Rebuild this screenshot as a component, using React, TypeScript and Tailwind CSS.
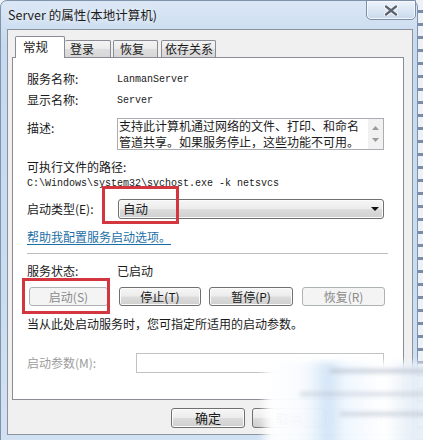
import React from "react";

const cjk = "font-['Noto_Sans_CJK_SC','Microsoft_YaHei',sans-serif]";
const mono = "font-['Liberation_Mono','Noto_Sans_CJK_SC',monospace]";

function Btn({ label, w, disabled }: { label: string; w: string; disabled?: boolean }) {
  return (
    <div
      className={`${w} h-full flex items-center justify-center rounded-[3px] border text-[12px] ${cjk} ${
        disabled
          ? "border-[#adb2b5] bg-[#f4f4f4] text-[#8a8a8a]"
          : "border-[#707070] text-[#1a1a1a] bg-[linear-gradient(180deg,#f6f6f6_0%,#ececec_48%,#dcdcdc_52%,#cfcfcf_100%)] shadow-[inset_0_0_0_1px_#fbfbfb]"
      }`}
    >
      {label}
    </div>
  );
}

const tabBg =
  "border-[#898c95] rounded-t-[2px] bg-[linear-gradient(180deg,#f4f4f4_0%,#ebebeb_50%,#dedede_51%,#d6d6d6_100%)] leading-[16px] whitespace-nowrap";

export default function App() {
  return (
    <div className="relative w-[423px] h-[440px] overflow-hidden bg-[repeating-linear-gradient(180deg,#eef2f7_0px,#eef2f7_10px,#7a8ca8_10px,#7a8ca8_13px)]">
      {/* window */}
      <div className="w-[418px] h-[452px] rounded-t-[7px] border border-[#7f93ad] bg-[linear-gradient(180deg,#dbe7f5_0%,#c6d9ee_10%,#c9dcf0_60%,#d3e2f3_100%)]">
        {/* title bar */}
        <div className="relative h-[28px] flex items-center pl-[7px]">
          <span className={`text-[12.5px] text-[#1c1c1c] ${cjk} [text-shadow:0_0_6px_#ffffff]`}>
            Server 的属性(本地计算机)
          </span>
          <div className="absolute right-[1px] top-[-1px] w-[50px] h-[20px] rounded-b-[5px] border border-[#7b8ea8] bg-[linear-gradient(180deg,#eef4fb_0%,#dae6f3_50%,#c9d9ec_100%)] shadow-[inset_0_0_0_1px_#f4f8fc] flex items-center justify-center">
            <svg width="14" height="11" viewBox="0 0 14 11">
              <path d="M2 1.5 L12 9.5 M12 1.5 L2 9.5" stroke="#ffffff" strokeWidth="4.2" strokeLinecap="round" />
              <path d="M2 1.5 L12 9.5 M12 1.5 L2 9.5" stroke="#5d6573" strokeWidth="2.4" strokeLinecap="round" />
            </svg>
          </div>
        </div>
        {/* client area */}
        <div className="ml-[6px] w-[406px] h-[406px] border border-[#8a949f] bg-[#f0f0f0]">
          {/* tabs */}
          <div className={`flex items-end h-[27px] pt-[6px] pl-[7px] text-[12px] text-[#1a1a1a] ${cjk}`}>
            <div className="relative z-10 w-[50px] h-[22px] -mb-[1px] bg-white border-t border-l border-r border-[#898c95] rounded-t-[2px] pl-[7px] pt-[1px] leading-[18px] text-[12.5px]">
              常规
            </div>
            <div className={`w-[46px] h-[17px] border-t border-r pl-[5px] ${tabBg}`}>登录</div>
            <div className={`ml-[2px] w-[45px] h-[17px] border-t border-l border-r pl-[6px] ${tabBg}`}>恢复</div>
            <div className={`ml-[3px] w-[55px] h-[17px] border-t border-l border-r pl-[3px] ${tabBg}`}>依存关系</div>
          </div>
          {/* panel */}
          <div className={`ml-[4px] w-[392px] h-[343px] border border-[#898c95] bg-white pl-[14px] pt-[10px] text-[12px] text-[#1a1a1a] ${cjk}`}>
            <div className="flex items-center h-[22px]">
              <span className="w-[90px]">服务名称:</span>
              <span className={`${mono} text-[10px]`}>LanmanServer</span>
            </div>
            <div className="flex items-center h-[20px]">
              <span className="w-[90px]">显示名称:</span>
              <span className={`${mono} text-[10px]`}>Server</span>
            </div>
            <div className="flex mt-[8px]">
              <span className="w-[90px] leading-[20px]">描述:</span>
              <div className="w-[267px] h-[32px] border border-[#abadb3] flex">
                <div className="flex-1 pl-[1px] text-[12px]">
                  <div className="h-[15px] leading-[14px] whitespace-nowrap">支持此计算机通过网络的文件、打印、和命名</div>
                  <div className="h-[15px] leading-[15px] whitespace-nowrap">管道共享。如果服务停止，这些功能不可用。</div>
                </div>
                <div className="w-[15px] h-full bg-[#f1f1f1] flex flex-col items-center justify-between py-[7px]">
                  <svg width="7" height="4" viewBox="0 0 7 4">
                    <path d="M0 4 L3.5 0 L7 4 Z" fill="#9a9a9a" />
                  </svg>
                  <svg width="7" height="4" viewBox="0 0 7 4">
                    <path d="M0 0 L3.5 4 L7 0 Z" fill="#9a9a9a" />
                  </svg>
                </div>
              </div>
            </div>
            <div className="mt-[7px] h-[20px] leading-[20px]">可执行文件的路径:</div>
            <div className={`h-[14px] leading-[14px] ${mono} text-[10px]`}>
              C:\Windows\system32\svchost.exe -k netsvcs
            </div>
            <div className="mt-[8px] flex items-center h-[20px]">
              <span className="w-[91px]">启动类型(E):</span>
              <div className="w-[266px] h-[20px] rounded-[3px] border border-[#707070] bg-[linear-gradient(180deg,#f6f6f6_0%,#ececec_48%,#dcdcdc_52%,#cfcfcf_100%)] shadow-[inset_0_0_0_1px_#fbfbfb] flex items-center justify-between pl-[4px] pr-[4px]">
                <span className="text-[12.5px]">自动</span>
                <svg width="8" height="4" viewBox="0 0 8 4">
                  <path d="M0 0 L8 0 L4 4 Z" fill="#111" />
                </svg>
              </div>
            </div>
            <div className="mt-[10px] h-[16px] leading-[16px]">
              <span className="text-[#1c6fa6] underline underline-offset-[2px]">帮助我配置服务启动选项。</span>
            </div>
            <div className="mt-[8px] h-px w-[361px] bg-[#bdbdbd]" />
            <div className="mt-[8px] flex items-center h-[18px]">
              <span className="w-[90px]">服务状态:</span>
              <span>已启动</span>
            </div>
            <div className="mt-[7px] flex h-[19px] ml-[2px]">
              <Btn label="启动(S)" w="w-[79px]" disabled />
              <div className="ml-[11px]" />
              <Btn label="停止(T)" w="w-[82px]" />
              <div className="ml-[8px]" />
              <Btn label="暂停(P)" w="w-[84px]" />
              <div className="ml-[9px]" />
              <Btn label="恢复(R)" w="w-[83px]" disabled />
            </div>
            <div className="mt-[10px] h-[16px] leading-[16px]">当从此处启动服务时，您可指定所适用的启动参数。</div>
            <div className="mt-[21px] flex items-center h-[20px]">
              <span className="w-[109px] text-[#9c9c9c]">启动参数(M):</span>
              <div className="w-[248px] h-[20px] border border-[#c3c3c3] bg-white" />
            </div>
          </div>
          {/* footer */}
          <div className={`mt-[8px] h-[20px] flex justify-end gap-[7px] pr-[5px] ${cjk}`}>
            <div className="w-[74px] h-full flex items-center justify-center rounded-[3px] border border-[#707070] text-[13px] text-[#1a1a1a] bg-[linear-gradient(180deg,#f6f6f6_0%,#ececec_48%,#dcdcdc_52%,#cfcfcf_100%)] shadow-[inset_0_0_0_1px_#fbfbfb]">
              确定
            </div>
            <div className="w-[74px] h-full flex items-center justify-center rounded-[3px] border border-[#707070] text-[13px] text-[#1a1a1a] bg-[linear-gradient(180deg,#f6f6f6_0%,#ececec_48%,#dcdcdc_52%,#cfcfcf_100%)]">
              取消
            </div>
            <div className="w-[74px] h-full flex items-center justify-center rounded-[3px] border border-[#adb2b5] text-[13px] text-[#8a8a8a] bg-[#f4f4f4]">
              应用
            </div>
          </div>
        </div>
      </div>

      {/* annotation boxes */}
      <div className="absolute left-[102px] top-[186px] w-[77px] h-[38px] border-[3px] border-[#d4363f]" />
      <div className="absolute left-[22px] top-[278px] w-[88px] h-[36px] border-[3px] border-[#d4363f]" />

      {/* blurred watermark haze */}
      <div className="absolute left-[262px] top-[362px] w-[175px] h-[95px] blur-[3px] bg-[linear-gradient(90deg,rgba(255,255,255,0.3)_0%,rgba(255,255,255,0.97)_5%,rgba(246,250,255,0.98)_25%,rgba(210,228,246,0.97)_38%,rgba(240,247,255,0.98)_48%,rgba(255,255,255,0.98)_70%,rgba(230,238,247,0.97)_86%,rgba(236,242,248,0.96)_100%)]" />
      <div className="absolute left-[330px] top-[369px] w-[100px] h-[4px] blur-[2px] bg-[#aab4c2] opacity-60" />
      <div className="absolute left-[300px] top-[392px] w-[130px] h-[4px] blur-[2px] bg-[#b5bfcc] opacity-50" />
      <div className="absolute left-[340px] top-[412px] w-[90px] h-[4px] blur-[2px] bg-[#aab4c2] opacity-50" />
    </div>
  );
}
